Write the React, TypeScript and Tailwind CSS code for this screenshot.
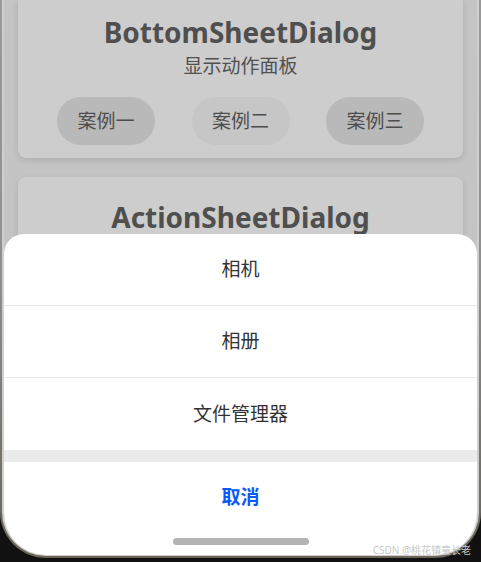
import React from "react";

const cases = [
  { label: "案例一", tone: "bg-[#b9b9b9]" },
  { label: "案例二", tone: "bg-[#c6c6c6]" },
  { label: "案例三", tone: "bg-[#b9b9b9]" },
];

const actions = ["相机", "相册", "文件管理器"];

const App = () => {
  return (
    <div
      className="relative w-[481px] h-[562px] overflow-hidden bg-[#111]"
      style={{ fontFamily: '"Noto Sans", "Noto Sans CJK SC", sans-serif' }}
    >
      {/* Phone frame */}
      <div className="h-[558px] rounded-b-[46px] bg-gradient-to-b from-[#9a9a9a] via-[#8e8e8e] to-[#6a6458] px-[2px] pb-[2px]">
        <div className="h-full rounded-b-[44px] bg-[#cfcfcf] px-[2px] pb-[1px]">
          <div className="relative h-full rounded-b-[42px] overflow-hidden bg-[#c4c4c4]">
            {/* Page behind the mask */}
            <div className="flex flex-col gap-[19px] px-[14px]">
              <div className="flex flex-col items-center rounded-b-[8px] bg-[#cdcdcd] pt-[14px] pb-[13px] shadow-[0_2px_6px_rgba(0,0,0,0.12)]">
                <div className="text-[28px] leading-[37px] font-bold text-[#4f4f4f]">BottomSheetDialog</div>
                <div className="mt-[2px] text-[19px] leading-[26px] text-[#505050]">显示动作面板</div>
                <div className="mt-[18px] flex w-full justify-between px-[39px]">
                  {cases.map((c) => (
                    <div
                      key={c.label}
                      className={`flex h-[48px] w-[98px] items-center justify-center rounded-full text-[19px] text-[#4d4d4d] ${c.tone}`}
                    >
                      {c.label}
                    </div>
                  ))}
                </div>
              </div>
              <div className="flex h-[200px] flex-col items-center rounded-[8px] bg-[#cdcdcd] pt-[22px] shadow-[0_2px_6px_rgba(0,0,0,0.12)]">
                <div className="text-[28px] leading-[37px] font-bold text-[#4f4f4f]">ActionSheetDialog</div>
              </div>
            </div>

            {/* Action sheet */}
            <div className="absolute left-0 right-0 top-[234px] bottom-0 flex flex-col rounded-t-[20px] bg-white">
              {actions.map((a, i) => (
                <div
                  key={a}
                  className={`flex h-[72px] items-center justify-center text-[19px] text-[#333] ${i < actions.length - 1 ? "border-b border-[#e9e9e9]" : ""}`}
                >
                  {a}
                </div>
              ))}
              <div className="h-[12px] bg-[#ebebeb]" />
              <div className="flex h-[70px] items-center justify-center text-[19px] font-bold text-[#0a59f7]">取消</div>
              <div className="mt-[6px] flex justify-center">
                <div className="h-[7px] w-[136px] rounded-full bg-[#b3b3b3]" />
              </div>
            </div>
          </div>
        </div>
      </div>

      {/* Watermark */}
      <div className="absolute right-[10px] top-[543px] text-[10px] leading-[14px] text-[#c9c9c9]">CSDN @桃花镇童长老</div>
    </div>
  );
};

export default App;
